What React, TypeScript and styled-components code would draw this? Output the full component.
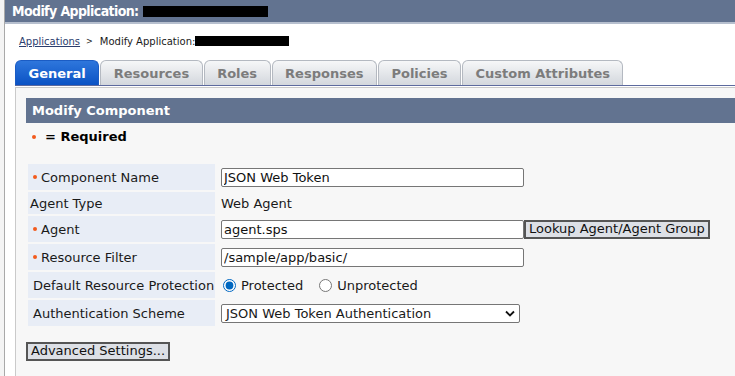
import styled, { createGlobalStyle } from "styled-components";

const GlobalStyle = createGlobalStyle`
  html, body {
    margin: 0;
    padding: 0;
    background: #f4f4f4;
    font-family: "DejaVu Sans", Verdana, sans-serif;
    overflow: hidden;
  }
`

const Page = styled.div`
  margin-left: 4px;
  border-left: 1px solid #a9a9a9;
  background: #ffffff;
  height: 376px;
  overflow: hidden;
`

const TitleBar = styled.div`
  height: 22px;
  display: flex;
  align-items: center;
  gap: 4px;
  padding-left: 7px;
  background: #627390;
  border-bottom: 2px solid #b6bfce;
  color: #ffffff;
  font-family: "DejaVu Sans Condensed", "DejaVu Sans", sans-serif;
  font-size: 14px;
  font-weight: bold;
  letter-spacing: -0.6px;
`

const Redacted = styled.span<{ w: number; h: number }>`
  display: inline-block;
  width: ${p => p.w}px;
  height: ${p => p.h}px;
  background: #000000;
`

const Crumbs = styled.div`
  display: flex;
  align-items: center;
  height: 34px;
  padding-left: 14px;
  font-size: 10px;
  color: #1a1a1a;

  a {
    color: #2b3d6e;
    text-decoration: underline;
  }
`

const Sep = styled.span`
  margin: 0 7px 0 6px;
  font-size: 8px;
`

const TabRow = styled.div`
  display: flex;
  align-items: flex-end;
  gap: 1px;
  margin-left: 10px;
  padding-top: 2px;
  border-bottom: 1px solid #5d6a9e;
`

const Tab = styled.div<{ active?: boolean }>`
  height: 25px;
  box-sizing: border-box;
  display: flex;
  align-items: center;
  padding: 0 12.5px;
  border-radius: 6px 6px 0 0;
  font-size: 13px;
  font-weight: bold;
  color: ${p => (p.active ? "#ffffff" : "#7c7c7c")};
  background: ${p =>
    p.active
      ? "linear-gradient(#2e76dc, #0b52c4)"
      : "linear-gradient(#f6f7f8, #d3d7dd)"};
  border: 1px solid ${p => (p.active ? "#1b5cc4" : "#b4b9c1")};
  border-bottom: none;
`

const Panel = styled.div`
  margin: 1px 0 0 10px;
  border: 1px solid #cacaca;
  border-right: none;
  background: #f7f7f7;
  padding: 10px 0 20px 10px;
  height: 290px;
`

const SectionHead = styled.div`
  height: 25px;
  display: flex;
  align-items: center;
  padding-left: 6px;
  background: #627390;
  color: #ffffff;
  font-size: 13px;
  font-weight: bold;
`

const Required = styled.div`
  display: flex;
  align-items: center;
  height: 27px;
  padding-left: 6px;
  font-size: 13px;
  font-weight: bold;
  color: #000000;
`

const Dot = styled.span<{ gap: number }>`
  display: inline-block;
  width: 4px;
  height: 4px;
  border-radius: 50%;
  background: #f25a1d;
  margin-right: ${p => p.gap}px;
`

const Form = styled.div`
  display: grid;
  grid-template-columns: 187px 1fr;
  column-gap: 2px;
  row-gap: 2px;
  margin: 14px 0 0 2px;
  font-size: 13px;
  color: #1a1a1a;
`

const Label = styled.div<{ tall?: boolean }>`
  height: ${p => (p.tall ? 26 : 22)}px;
  display: flex;
  align-items: center;
  padding-left: ${p => (p.tall ? 5 : 2)}px;
  background: #e8edf6;
`

const Value = styled.div`
  display: flex;
  align-items: center;
  padding-left: 4px;
`

const TextInput = styled.input`
  width: 303px;
  height: 19px;
  box-sizing: border-box;
  border: 1px solid #767676;
  border-radius: 2px;
  padding: 0 2px;
  font: 13px "DejaVu Sans", Verdana, sans-serif;
  color: #111111;
  background: #ffffff;
`

const Button = styled.button`
  height: 19px;
  box-sizing: border-box;
  padding: 0 3px;
  border: 2px solid #555555;
  border-radius: 0;
  background: #dde0e6;
  font: 13px "DejaVu Sans", Verdana, sans-serif;
  color: #111111;
  line-height: 14px;
`

const Radio = styled.label`
  display: inline-flex;
  align-items: center;
  margin-right: 14px;

  input {
    margin: 0 5px 0 2px;
    width: 13px;
    height: 13px;
    accent-color: #0067c0;
  }
`

const Select = styled.div`
  width: 299px;
  height: 19px;
  box-sizing: border-box;
  display: flex;
  align-items: center;
  justify-content: space-between;
  padding: 0 4px 0 4px;
  border: 1px solid #767676;
  border-radius: 2px;
  background: #ffffff;
`

const Footer = styled.div`
  margin-top: 14px;
`

function Chevron() {
  return (
    <svg width="10" height="7" viewBox="0 0 10 7">
      <path d="M1 1.5 L5 5.5 L9 1.5" fill="none" stroke="#111" strokeWidth="1.8" />
    </svg>
  )
}

export default function App() {
  return (
    <>
      <GlobalStyle />
      <Page>
        <TitleBar>
          Modify Application: <Redacted w={125} h={11} />
        </TitleBar>
        <Crumbs>
          <a href="#">Applications</a>
          <Sep>&gt;</Sep>
          Modify Application:<Redacted w={94} h={10} />
        </Crumbs>
        <TabRow>
          <Tab active>General</Tab>
          <Tab>Resources</Tab>
          <Tab>Roles</Tab>
          <Tab>Responses</Tab>
          <Tab>Policies</Tab>
          <Tab>Custom Attributes</Tab>
        </TabRow>
        <Panel>
          <SectionHead>Modify Component</SectionHead>
          <Required>
            <Dot gap={9} />= Required
          </Required>
          <Form>
            <Label tall><Dot gap={4} />Component Name</Label>
            <Value><TextInput defaultValue="JSON Web Token" /></Value>

            <Label>Agent Type</Label>
            <Value>Web Agent</Value>

            <Label tall><Dot gap={4} />Agent</Label>
            <Value>
              <TextInput defaultValue="agent.sps" />
              <Button>Lookup Agent/Agent Group</Button>
            </Value>

            <Label tall><Dot gap={4} />Resource Filter</Label>
            <Value><TextInput defaultValue="/sample/app/basic/" /></Value>

            <Label tall>Default Resource Protection</Label>
            <Value>
              <Radio><input type="radio" name="prot" defaultChecked />Protected</Radio>
              <Radio><input type="radio" name="prot" />Unprotected</Radio>
            </Value>

            <Label tall>Authentication Scheme</Label>
            <Value>
              <Select>
                JSON Web Token Authentication
                <Chevron />
              </Select>
            </Value>
          </Form>
          <Footer>
            <Button>Advanced Settings...</Button>
          </Footer>
        </Panel>
      </Page>
    </>
  )
}
